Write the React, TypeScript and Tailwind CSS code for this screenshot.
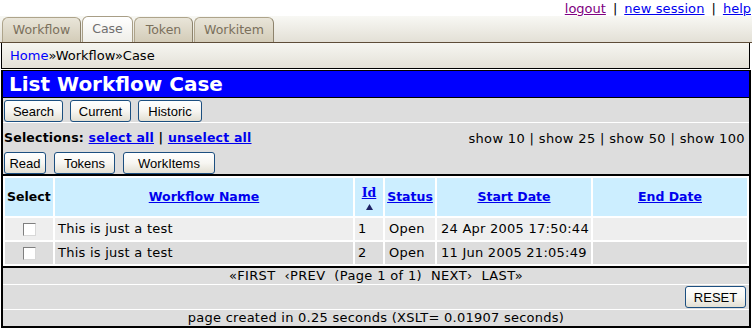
import React from 'react'

const Btn = ({ label, w }: { label: string; w: string }) => (
  <button
    className={`${w} h-[22px] shrink-0 rounded-[3px] border border-[#1c4f80] bg-linear-to-b from-white via-[#f7f6f2] to-[#e2dfd3] text-[13px] leading-none text-black font-['Liberation_Sans',Arial,sans-serif]`}
  >
    {label}
  </button>
)

const Tab = ({ label, w, active }: { label: string; w: string; active?: boolean }) => (
  <div
    className={
      active
        ? `${w} h-[26px] flex items-center justify-center rounded-t-[6px] border border-b-0 border-[#a89e86] bg-linear-to-b from-white to-[#efeee8] text-[12.5px] text-[#6f6f6f]`
        : `${w} h-[25px] flex items-center justify-center rounded-t-[6px] border border-b-0 border-[#aea48b] border-r-[#8d836c] bg-linear-to-b from-[#e9e5d9] to-[#d3ccb8] text-[12.5px] text-[#7b705c]`
    }
  >
    {label}
  </div>
)

const Check = () => (
  <div className="mx-auto w-[13px] h-[13px] border border-t-[#7f7f7f] border-l-[#7f7f7f] border-b-[#d8d8d8] border-r-[#d8d8d8] bg-white" />
)

const rows = [
  { name: 'This is just a test', id: '1', status: 'Open', start: '24 Apr 2005 17:50:44', bg: 'bg-[#eeeeee]' },
  { name: 'This is just a test', id: '2', status: 'Open', start: '11 Jun 2005 21:05:49', bg: 'bg-[#dddddd]' },
]

const App = () => {
  return (
    <div className="w-[752px] h-[329px] overflow-hidden bg-white text-black font-['DejaVu_Sans',Verdana,sans-serif] text-[13px]">
      {/* top links */}
      <div className="h-[16px] flex items-center justify-end pr-[1px] text-[13px] leading-none">
        <a className="text-[#800080] underline">logout</a>
        <span className="px-[7px]">|</span>
        <a className="text-[#0000ee] underline tracking-[0.1px]">new session</a>
        <span className="px-[7px]">|</span>
        <a className="text-[#0000ee] underline">help</a>
      </div>

      {/* tabs */}
      <div className="h-[27px] flex items-end gap-[1px] pl-[2px] border-b border-[#5e4d38] bg-linear-to-b from-[#f8f8f4] to-[#e3e0d6]">
        <Tab label="Workflow" w="w-[79px]" />
        <Tab label="Case" w="w-[51px]" active />
        <Tab label="Token" w="w-[59px]" />
        <Tab label="Workitem" w="w-[80px]" />
      </div>

      {/* breadcrumb */}
      <div className="ml-[1px] w-[749px] h-[26px] flex items-center pl-[8px] border-x border-b border-black bg-linear-to-b from-[#f6f6f1] to-[#e4e1d8]">
        <a className="text-[#0000ff]">Home</a>
        <span>»Workflow»Case</span>
      </div>

      {/* main box */}
      <div className="mt-[1px] ml-[1px] w-[750px] border-x-2 border-t border-b-2 border-black bg-[#dddddd]">
        <div className="h-[27px] flex items-center pl-[6px] bg-[#0000ff] border-b border-black text-white font-bold text-[20px] leading-none">
          List Workflow Case
        </div>

        <div className="h-[25px] flex items-start pt-[2px] pl-[1px] gap-[7px] border-b border-white">
          <Btn label="Search" w="w-[59px]" />
          <Btn label="Current" w="w-[61px]" />
          <Btn label="Historic" w="w-[64px]" />
        </div>

        <div className="h-[51px] flex flex-col">
          <div className="h-[29px] flex items-center justify-between pl-[1px] pr-[4px] pt-[2px]">
            <div className="text-[12.5px] font-bold tracking-[0.2px]">
              Selections: <a className="text-[#0000ee] underline">select all</a>&nbsp;|&nbsp;
              <a className="text-[#0000ee] underline">unselect all</a>
            </div>
            <div className="tracking-[0.35px]">show 10 | show 25 | show 50 | show 100</div>
          </div>
          <div className="flex pl-[1px] gap-[8px]">
            <Btn label="Read" w="w-[42px]" />
            <Btn label="Tokens" w="w-[61px]" />
            <Btn label="WorkItems" w="w-[92px]" />
          </div>
        </div>

        <div className="border-y-2 border-black bg-white">
          <table className="table-fixed border-separate border-spacing-[2px] w-[746px]">
            <colgroup>
              <col className="w-[48px]" />
              <col className="w-[298px]" />
              <col className="w-[28px]" />
              <col className="w-[50px]" />
              <col className="w-[154px]" />
              <col className="w-[154px]" />
            </colgroup>
            <thead>
              <tr className="h-[38px] bg-[#cceeff] text-[12.5px] font-bold">
                <th className="p-0 text-left pl-[2px]">Select</th>
                <th className="p-0 text-center"><a className="text-[#0000ee] underline">Workflow Name</a></th>
                <th className="p-0 text-center">
                  <a className="text-[#0000ee] underline font-['DejaVu_Serif',serif]">Id</a>
                  <svg width="7" height="6" viewBox="0 0 7 6" className="mx-auto mt-[1px] block">
                    <polygon points="3.5,0 7,6 0,6" fill="#1d2266" />
                  </svg>
                </th>
                <th className="p-0 text-center"><a className="text-[#0000ee] underline">Status</a></th>
                <th className="p-0 text-center"><a className="text-[#0000ee] underline">Start Date</a></th>
                <th className="p-0 text-center"><a className="text-[#0000ee] underline">End Date</a></th>
              </tr>
            </thead>
            <tbody>
              {rows.map((r) => (
                <tr key={r.id} className={`h-[22px] ${r.bg} tracking-[0.25px]`}>
                  <td className="p-0"><Check /></td>
                  <td className="p-0 pl-[3px]">{r.name}</td>
                  <td className="p-0 pl-[3px]">{r.id}</td>
                  <td className="p-0 pl-[4px]">{r.status}</td>
                  <td className="p-0 pl-[4px]">{r.start}</td>
                  <td className="p-0"></td>
                </tr>
              ))}
            </tbody>
          </table>
        </div>

        <div className="h-[17px] flex items-center justify-center border-b border-white whitespace-pre tracking-[0.35px]">
          «FIRST  ‹PREV  (Page 1 of 1)  NEXT›  LAST»
        </div>
        <div className="h-[25px] flex items-center justify-end pr-[3px] border-b border-white">
          <Btn label="RESET" w="w-[61px]" />
        </div>
        <div className="h-[16px] flex items-center justify-center tracking-[0.25px]">
          page created in 0.25 seconds (XSLT= 0.01907 seconds)
        </div>
      </div>
    </div>
  )
}

export default App
